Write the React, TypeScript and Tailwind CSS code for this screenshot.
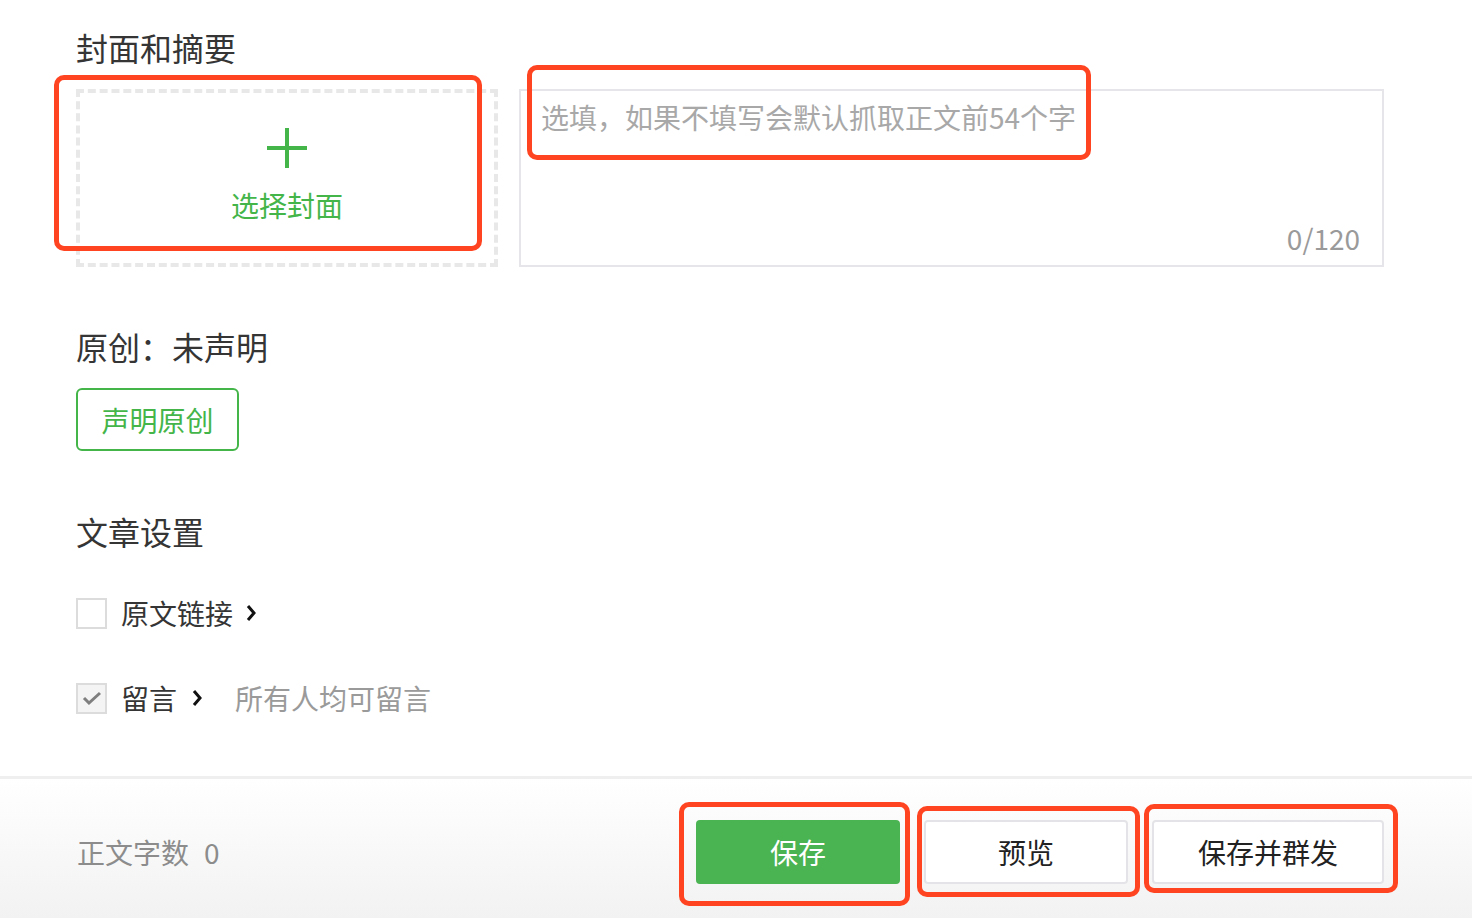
import React from "react";

const font = { fontFamily: '"Noto Sans CJK SC", "Noto Sans", sans-serif' };

function Chevron() {
  return (
    <svg width="12" height="20" viewBox="0 0 12 20" className="shrink-0">
      <polyline points="3,3 9,10 3,17" fill="none" stroke="#111" strokeWidth="3" strokeLinejoin="miter" />
    </svg>
  );
}

export default function App() {
  return (
    <div className="relative flex h-[918px] w-full flex-col overflow-hidden bg-white text-[#353535]" style={font}>
      <main className="flex-1 pl-[76px] pr-[88px]">
        <h2 className="mt-[25px] text-[32px] leading-[44px]">封面和摘要</h2>
        <div className="mt-[20px] flex gap-[21px]">
          <div className="flex h-[178px] w-[422px] flex-col items-center border-[4px] border-dashed border-[#e8e8e8]">
            <svg width="42" height="42" viewBox="0 0 42 42" className="mt-[34px]">
              <path d="M21 1v40M1 21h40" stroke="#44b549" strokeWidth="4" />
            </svg>
            <span className="mt-[16px] text-[28px] leading-[40px] text-[#44b549]">选择封面</span>
          </div>
          <div className="flex h-[178px] flex-1 flex-col border-2 border-[#e6e6ea] pl-[20px] pr-[22px]">
            <span className="mt-[6px] text-[28px] leading-[40px] text-[#a8a8a8]">选填，如果不填写会默认抓取正文前54个字</span>
            <span className="mt-auto mb-[7px] self-end text-[28px] leading-[40px] text-[#9a9a9a]">0/120</span>
          </div>
        </div>

        <h2 className="mt-[57px] text-[32px] leading-[44px]">原创：未声明</h2>
        <button className="mt-[20px] flex h-[63px] w-[163px] items-center justify-center rounded-[6px] border-2 border-[#44b549] text-[28px] text-[#44b549]">
          声明原创
        </button>

        <h2 className="mt-[58px] text-[32px] leading-[44px]">文章设置</h2>
        <div className="mt-[44px] flex h-[32px] items-center">
          <span className="h-[31px] w-[31px] shrink-0 border-2 border-[#dcdcdc] bg-white" />
          <span className="ml-[14px] text-[28px] leading-[32px]">原文链接</span>
          <span className="ml-[12px]"><Chevron /></span>
        </div>
        <div className="mt-[53px] flex h-[32px] items-center">
          <span className="flex h-[31px] w-[31px] shrink-0 items-center justify-center border-2 border-[#dcdcdc] bg-[#f4f4f4]">
            <svg width="20" height="16" viewBox="0 0 20 16">
              <polyline points="2,8 7,13 18,3" fill="none" stroke="#7f7f7f" strokeWidth="3" />
            </svg>
          </span>
          <span className="ml-[14px] text-[28px] leading-[32px]">留言</span>
          <span className="ml-[14px]"><Chevron /></span>
          <span className="ml-[32px] text-[28px] leading-[32px] text-[#9a9a9a]">所有人均可留言</span>
        </div>
      </main>

      <footer className="flex h-[142px] items-center border-t-[3px] border-[#efefef] bg-gradient-to-b from-white to-[#f2f2f2] pl-[77px] pr-[88px] pt-[6px]">
        <span className="text-[28px] text-[#8c8c8c]">正文字数</span>
        <span className="ml-[15px] text-[28px] text-[#8c8c8c]">0</span>
        <div className="ml-auto flex gap-[24px]">
          <button className="flex h-[64px] w-[204px] items-center justify-center rounded-[4px] bg-[#4ab352] text-[28px] text-white">保存</button>
          <button className="flex h-[64px] w-[204px] items-center justify-center rounded-[4px] border-2 border-[#e4e4e8] bg-white text-[28px] text-[#222]">预览</button>
          <button className="flex h-[64px] w-[232px] items-center justify-center rounded-[4px] border-2 border-[#e4e4e8] bg-white text-[28px] text-[#222]">保存并群发</button>
        </div>
      </footer>

      {/* annotation overlays */}
      <div className="pointer-events-none absolute left-[54px] top-[75px] h-[176px] w-[428px] rounded-[10px] border-[5px] border-[#ff4422]" />
      <div className="pointer-events-none absolute left-[527px] top-[65px] h-[95px] w-[564px] rounded-[10px] border-[5px] border-[#ff4422]" />
      <div className="pointer-events-none absolute left-[679px] top-[802px] h-[104px] w-[231px] rounded-[10px] border-[5px] border-[#ff4422]" />
      <div className="pointer-events-none absolute left-[917px] top-[806px] h-[91px] w-[223px] rounded-[10px] border-[5px] border-[#ff4422]" />
      <div className="pointer-events-none absolute left-[1144px] top-[804px] h-[89px] w-[254px] rounded-[10px] border-[5px] border-[#ff4422]" />
    </div>
  );
}
